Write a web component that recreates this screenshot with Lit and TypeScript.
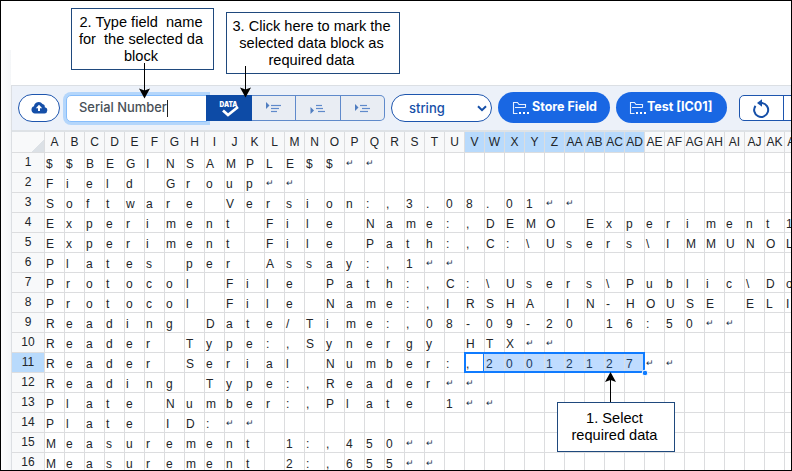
import { LitElement, html, css, svg } from "lit";
import { customElement } from "lit/decorators.js";
import { classMap } from "lit/directives/class-map.js";

const COLUMN_COUNT = 38;
const SELECTED_ROW = 11;
const FIRST_SELECTED = 21;
const LAST_SELECTED = 29;

const LINES = [
  "$$BEGINSAMPLE$$↵↵",
  "Field Group↵↵",
  "Software Version:,3.08.01↵↵",
  "Experiment File Name:,DEMO Experiment1",
  "Experiment File Path:,C:\\Users\\IMMUNOL",
  "Plates per Assay:,1↵↵",
  "Protocol File Path:,C:\\Users\\Public\\Do",
  "Protocol File Name:,IRSHA IN-HOUSE ELI",
  "Reading Date/Time:,08-09-20 16:50↵↵",
  "Reader Type:,Synergy HTX↵↵",
  "Reader Serial Number:,20012127↵↵",
  "Reading Type:,Reader↵↵",
  "Plate Number:,Plate 1↵↵",
  "Plate ID:↵↵",
  "Measurement 1:,450↵↵",
  "Measurement 2:,655↵↵",
];

const columnName = (i: number): string =>
  i < 26 ? String.fromCharCode(65 + i) : "A" + String.fromCharCode(65 + i - 26);

@customElement("data-sheet")
export class DataSheet extends LitElement {
  static styles = css`
    :host { display: block; font: 12px/19px "Liberation Sans", Arial, sans-serif; color: #212529; }
    .row { display: grid; grid-template-columns: 33px repeat(38, 20px); height: 20px; }
    .row > div { box-sizing: border-box; border-right: 1px solid #dcdddf; border-bottom: 1px solid #dcdddf; height: 20px; overflow: hidden; white-space: pre; }
    .head { height: 21px; }
    .row.head > div { height: 21px; background: #f8f9fa; text-align: center; line-height: 20px; overflow: visible; }
    .row > .num { background: #f8f9fa; text-align: center; line-height: 19px; }
    .row > .cell { padding-left: 1px; line-height: 23px; }
    .row.head > .on, .row > .num.on { background: #b8dafc; }
    .row > .cell.ret { font: 9px/20px "Liberation Sans", sans-serif; color: #17344f; }
    .row > .cell.fill { background: #bfdcff; color: #1b3a5c; }
    .row.head > .corner { background: linear-gradient(135deg, transparent 50%, #dce1e6 50%) right bottom / 13px 13px no-repeat #f8f9fa; }
  `;

  render() {
    const cols = Array.from({ length: COLUMN_COUNT }, (_, i) => i);
    const inRange = (c: number) => c >= FIRST_SELECTED && c <= LAST_SELECTED;
    return html`
      <div class="row head">
        <div class="corner"></div>
        ${cols.map((c) => html`<div class=${classMap({ on: inRange(c) })}>${columnName(c)}</div>`)}
      </div>
      ${LINES.map((line, r) => {
        const active = r + 1 === SELECTED_ROW;
        return html`<div class="row">
          <div class=${classMap({ num: true, on: active })}>${r + 1}</div>
          ${cols.map((c) => {
            const ch = line[c] ?? "";
            return html`<div class=${classMap({
              cell: true,
              ret: ch === "↵",
              fill: active && inRange(c) && c !== FIRST_SELECTED,
            })}>${ch}</div>`;
          })}
        </div>`;
      })}
    `;
  }
}

type Span = [number, number];

// A small arrow pointing right, followed by three text lines 3px apart.
const lineIcon = (arrowX: number, arrowY: number, spans: Span[]) => html`
  <svg width="43" height="24" viewBox="0 0 43 24">
    <path d="M${arrowX} ${arrowY}v7l3.5-3.5z" fill="#4f7dc0"/>
    ${spans.map(([a, b], i) => svg`<path d="M${a} ${9.5 + i * 3}H${b}" stroke="#5f8acb" stroke-width="1.2"/>`)}
  </svg>`;

const folder = html`<svg class="folder" width="18" height="16" viewBox="0 0 18 16">
  <path d="M5.500 13.500H1.500V2.500h4l1.500 2h6.500v3M3 7.500h10.500" fill="none" stroke="#e6efff" stroke-width="1.100"/>
  <path d="M7 12h2v2H7zM11 12h2v2h-2zM15 12h2v2h-2z" fill="#fff"/>
</svg>`;

@customElement("app-root")
export class AppRoot extends LitElement {
  static styles = css`
    :host { display: block; }
    .frame { position: relative; box-sizing: border-box; width: 792px; height: 471px; border: 1px solid #000; overflow: hidden; background: #fff; }
    .page { display: flex; height: 100%; }
    .gutter { flex: none; width: 10px; margin-top: 49px; background: linear-gradient(90deg, #fdfdfe, #f4f6f8); }
    .main { flex: none; width: 800px; margin-top: 84px; border-left: 1px solid #dcdfe3; }
    .bar { display: flex; box-sizing: border-box; height: 47px; padding: 6px 0 0 6px; background: #ecf1f9; border-top: 1px solid #dbdfe4; border-bottom: 2px solid #dee2e6; align-items: flex-start; color: #154fa8; }
    .bar > * { box-sizing: border-box; flex: none; }
    .pill { border: 1px solid #1d55ae; border-radius: 14px; background: #fff; height: 28px; margin-top: 2px; }
    .upload { width: 42px; padding: 6px 0 0 12px; }
    .field { width: 141px; height: 27px; margin: 3px 0 0 6px; border: 1px solid #86bdfb; border-radius: 5px 0 0 5px; background: #fff; box-shadow: 0 0 0 3px #b4d6fb; color: #495057; font: 500 12.9px/25px Inter, sans-serif; padding-left: 12px; white-space: nowrap; display: flex; align-items: center; }
    .field span:first-child { margin-top: -2px; }
    .caret { width: 1px; height: 17px; background: #222; }
    .data { width: 46px; height: 26px; margin-top: 3px; margin-left: -1px; background: #0d4ba6; color: #fff; position: relative; }
    .data svg, .tool svg, .pill svg { display: block; }
    .tool { width: 45px; height: 26px; margin-top: 3px; border: 1px solid #5f8acb; border-left-width: 0; background: #e9edf3; }
    .tool.edge { width: 44px; }
    .tool.last { border-radius: 0 5px 5px 0; }
    .select { width: 101px; margin-left: 6px; padding: 0 4px 0 17px; display: flex; align-items: center; justify-content: space-between; font: 500 13px/24px Inter, sans-serif; }
    .action { display: flex; align-items: center; height: 31px; border-radius: 16px; background: #1967e3; color: #fff; font: 700 12.5px/30px Inter, sans-serif; white-space: nowrap; }
    .store { width: 112px; margin-left: 6px; padding-left: 14px; gap: 2px; }
    .test { width: 111px; margin-left: 6px; padding-left: 13px; }
    .action span { margin-top: -1px; }
    .folder { flex: none; }
    .history { width: 70px; height: 26px; margin: 3px 0 0 12px; border: 1px solid #1d55ae; border-radius: 5px; background: #fff; display: flex; }
    .undo { width: 43px; border-right: 1px solid #1d55ae; }
    .note { position: absolute; box-sizing: border-box; border: 1px solid #1f497d; background: #fff; color: #000; font: 14.6px/17px "Liberation Sans", Arial, sans-serif; text-align: center; white-space: pre; padding-right: 3px; }
    .n1 { left: 556px; top: 401px; width: 118px; height: 50px; padding-top: 7px; }
    .n2 { left: 70px; top: 7px; width: 143px; height: 62px; padding-top: 5px; }
    .n3 { left: 225px; top: 11px; width: 174px; height: 62px; padding-top: 5px; }
    .overlay { position: absolute; left: -1px; top: -1px; }
  `;

  render() {
    return html`<div class="frame">
      <div class="page">
        <div class="gutter"></div>
        <div class="main">
          <div class="bar">
            <div class="pill upload">
              <svg width="17" height="13" viewBox="0 0 17 13">
                <path d="M4 12.500a3.700 3.700 0 0 1-1-7.200A4.700 4.700 0 0 1 11.500 3a3 3 0 0 1 2.300 3.200A3.200 3.200 0 0 1 13.500 12.500z" fill="#154fa8"/>
                <path d="M8 3.800l3.200 3.400H9V10H7V7.200H4.800z" fill="#fff"/>
              </svg>
            </div>
            <div class="field"><span>Serial Number</span><span class="caret"></span></div>
            <div class="data">
              <svg width="46" height="26" viewBox="0 0 46 26">
                <text x="13.500" y="12" textLength="18" lengthAdjust="spacingAndGlyphs" font-family="Inter, sans-serif" font-size="7" font-weight="900" fill="#fff">DATA</text>
                <path d="M17 15.500l5 4.500L32 12" fill="none" stroke="#fff" stroke-width="2.800"/>
              </svg>
            </div>
            <div class="tool edge">${lineIcon(14, 6, [[19, 29], [19, 27], [19, 25]])}</div>
            <div class="tool">${lineIcon(14.5, 11, [[20, 26], [20, 27], [22, 29]])}</div>
            <div class="tool edge last">${lineIcon(14, 8, [[19, 26], [21, 29], [19, 27]])}</div>
            <div class="pill select"><span>string</span>
              <svg width="10" height="7" viewBox="0 0 10 7"><path d="M1 1.200l4 4 4-4" fill="none" stroke="#154fa8" stroke-width="2"/></svg>
            </div>
            <div class="action store">${folder}<span>Store Field</span></div>
            <div class="action test">${folder}<span>Test [IC01]</span></div>
            <div class="history"><div class="undo">
              <svg width="43" height="24" viewBox="0 0 43 24">
                <path d="M15.500 9.800A7 7 0 1 0 22 7H19" fill="none" stroke="#154fa8" stroke-width="2"/>
                <path d="M22 3.200v7.600l-5-3.800z" fill="#154fa8"/>
              </svg>
            </div></div>
          </div>
          <data-sheet></data-sheet>
        </div>
      </div>
      <div class="note n2">2. Type field  name
for  the selected da
block</div>
      <div class="note n3">3. Click here to mark the
selected data block as
required data</div>
      <div class="note n1">1. Select
required data</div>
      <svg class="overlay" width="792" height="471" viewBox="0 0 792 471">
        <path d="M465 353h179v19H465z" fill="none" stroke="#0f7bff" stroke-width="2"/>
        <path d="M483.500 353v19" stroke="#0f7bff"/>
        <circle cx="645" cy="373" r="2.800" fill="#0f7bff" stroke="#fff"/>
        <path d="M144.500 63v30M245.500 66v26M610.500 402v-25" stroke="#000" fill="none"/>
        <path d="M144.500 98.500l-5.500-10 5.500 2 5.500-2zM245.500 97.500l-5.500-10 5.500 2 5.500-2zM610.500 372l-5.500 10 5.500-2 5.500 2z"/>
        <path d="M791.500 0v471" stroke="#000"/>
      </svg>
    </div>`;
  }
}
